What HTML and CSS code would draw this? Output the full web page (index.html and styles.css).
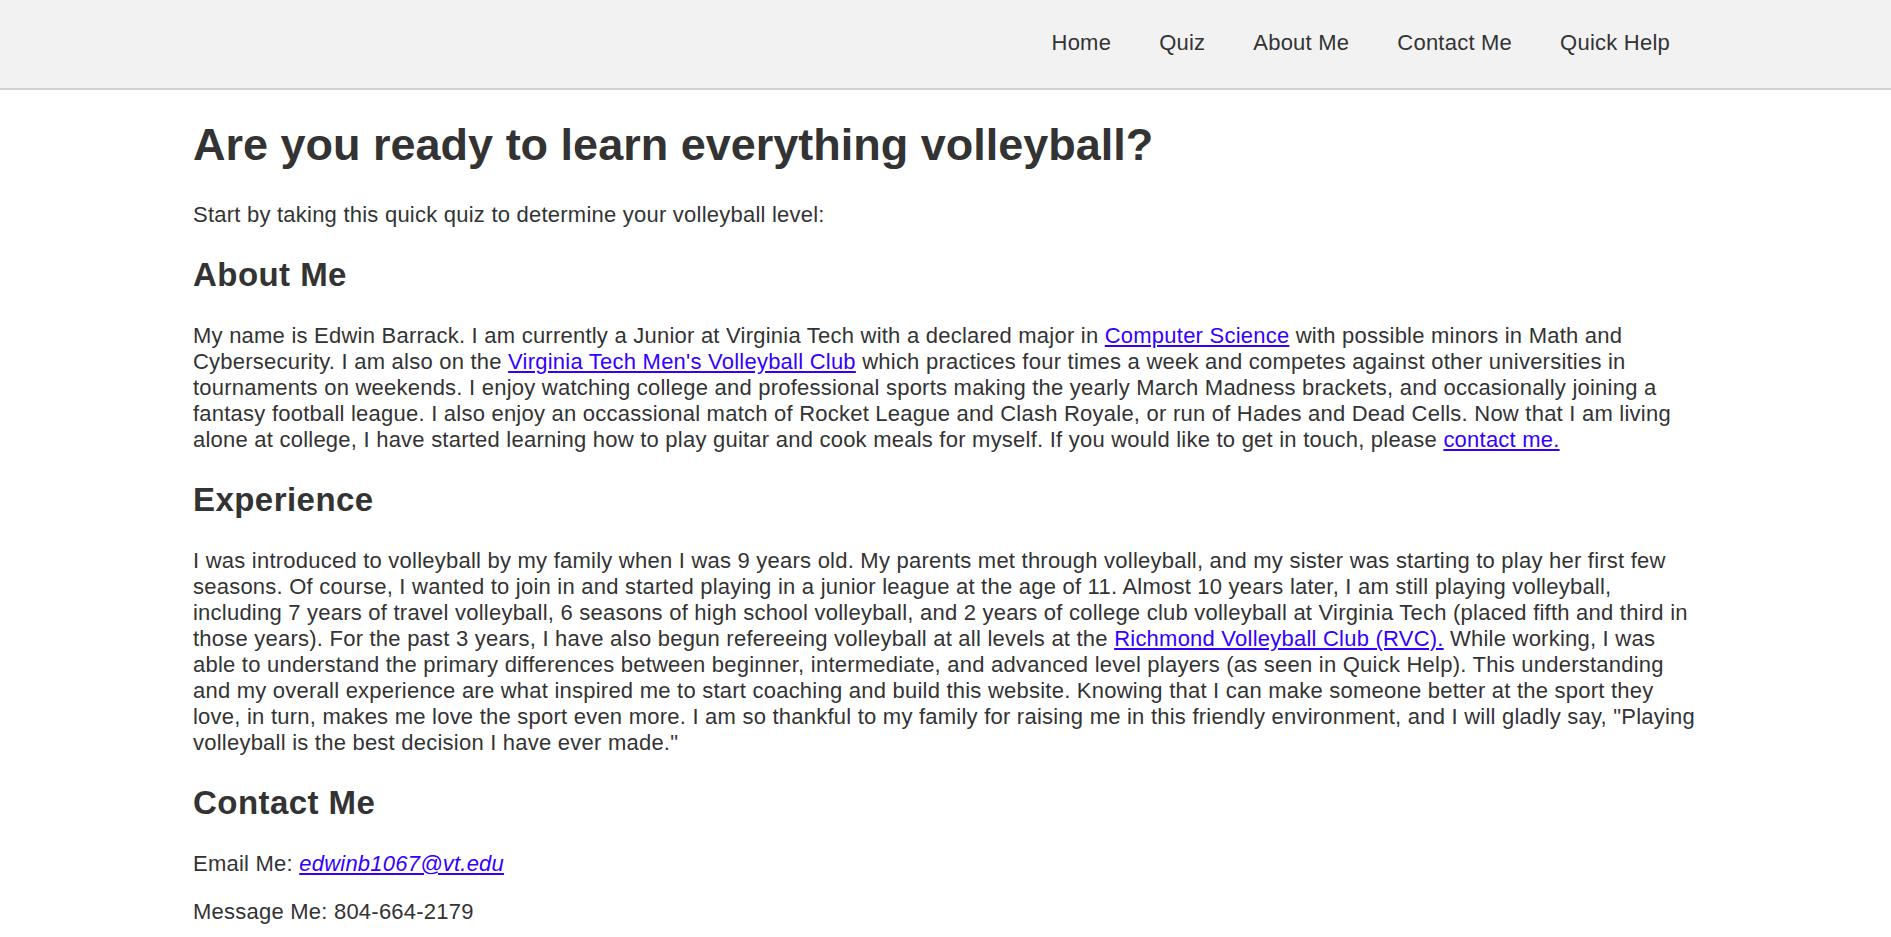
FILE: index.html
```html
<!DOCTYPE html>
<html lang="en">
<head>
<meta charset="utf-8">
<title>Volleyball</title>
<link rel="stylesheet" href="styles.css">
</head>
<body>
<header class="site-header">
  <nav class="nav">
    <a class="nav-link" href="#">Home</a>
    <a class="nav-link" href="#">Quiz</a>
    <a class="nav-link" href="#">About Me</a>
    <a class="nav-link" href="#">Contact Me</a>
    <a class="nav-link" href="#">Quick Help</a>
  </nav>
</header>
<main class="content">
  <h1 class="title">Are you ready to learn everything volleyball?</h1>
  <p class="text">Start by taking this quick quiz to determine your volleyball level:</p>

  <h2 class="section-title">About Me</h2>
  <p class="text">My name is Edwin Barrack. I am currently a Junior at Virginia Tech with a declared major in <a class="link" href="#">Computer Science</a> with possible minors in Math and Cybersecurity. I am also on the <a class="link" href="#">Virginia Tech Men's Volleyball Club</a> which practices four times a week and competes against other universities in tournaments on weekends. I enjoy watching college and professional sports making the yearly March Madness brackets, and occasionally joining a fantasy football league. I also enjoy an occassional match of Rocket League and Clash Royale, or run of Hades and Dead Cells. Now that I am living alone at college, I have started learning how to play guitar and cook meals for myself. If you would like to get in touch, please <a class="link" href="#">contact me.</a></p>

  <h2 class="section-title">Experience</h2>
  <p class="text">I was introduced to volleyball by my family when I was 9 years old. My parents met through volleyball, and my sister was starting to play her first few seasons. Of course, I wanted to join in and started playing in a junior league at the age of 11. Almost 10 years later, I am still playing volleyball, including 7 years of travel volleyball, 6 seasons of high school volleyball, and 2 years of college club volleyball at Virginia Tech (placed fifth and third in those years). For the past 3 years, I have also begun refereeing volleyball at all levels at the <a class="link" href="#">Richmond Volleyball Club (RVC).</a> While working, I was able to understand the primary differences between beginner, intermediate, and advanced level players (as seen in Quick Help). This understanding and my overall experience are what inspired me to start coaching and build this website. Knowing that I can make someone better at the sport they love, in turn, makes me love the sport even more. I am so thankful to my family for raising me in this friendly environment, and I will gladly say, "Playing volleyball is the best decision I have ever made."</p>

  <h2 class="section-title">Contact Me</h2>
  <p class="text">Email Me: <a class="link email" href="#">edwinb1067@vt.edu</a></p>
  <p class="text">Message Me: 804-664-2179</p>
</main>
</body>
</html>
```

FILE: styles.css
```css
html, body {
  margin: 0;
  padding: 0;
}
body {
  font-family: "Liberation Sans", Arial, sans-serif;
  font-size: 22px;
  color: #333333;
  background: #ffffff;
}
.site-header {
  background: #f2f2f2;
  height: 88px;
  border-bottom: 2px solid #d0d0d0;
}
.nav {
  max-width: 1505px;
  margin: 0 auto;
  height: 100%;
  display: flex;
  justify-content: flex-end;
  align-items: center;
  padding: 0 4px 2px 0;
  box-sizing: border-box;
}
.nav-link {
  color: #333333;
  text-decoration: none;
  font-size: 22px;
  letter-spacing: 0.23px;
  padding: 0 24px;
}
.content {
  max-width: 1505px;
  margin: 0 auto;
  padding-bottom: 20px;
}
.title {
  font-size: 45px;
  line-height: 52px;
  font-weight: bold;
  margin: 29px 0 30.5px;
}
.section-title {
  font-size: 33px;
  line-height: 38px;
  letter-spacing: 0.45px;
  font-weight: bold;
  margin: 28.5px 0;
}
.text {
  line-height: 26px;
  letter-spacing: 0.23px;
  margin: 22.5px 0;
}
.link {
  color: #3300ff;
  text-decoration: underline;
}
.email {
  font-style: italic;
}
```
